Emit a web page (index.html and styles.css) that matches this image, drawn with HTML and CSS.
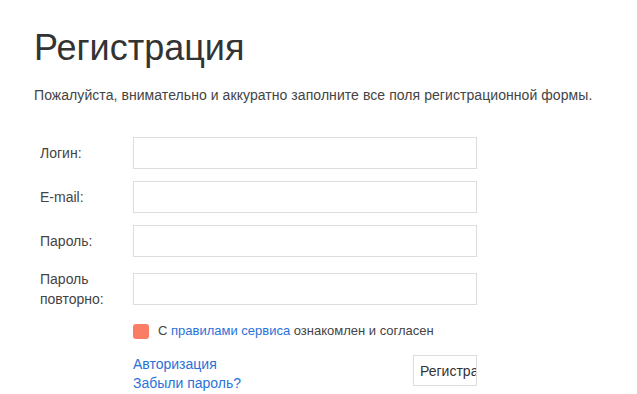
FILE: index.html
```html
<!DOCTYPE html>
<html lang="ru">
<head>
<meta charset="utf-8">
<title>Регистрация</title>
<link rel="stylesheet" href="styles.css">
</head>
<body>
<div class="page">
  <h1 class="title">Регистрация</h1>
  <p class="lead">Пожалуйста, внимательно и аккуратно заполните все поля регистрационной формы.</p>
  <form class="form">
    <div class="row">
      <label class="label">Логин:</label>
      <input class="field" type="text">
    </div>
    <div class="row">
      <label class="label">E-mail:</label>
      <input class="field" type="text">
    </div>
    <div class="row">
      <label class="label">Пароль:</label>
      <input class="field" type="password">
    </div>
    <div class="row">
      <label class="label">Пароль<br>повторно:</label>
      <input class="field" type="password">
    </div>
    <div class="agree">
      <span class="check"></span>
      <span class="agree-text">С <a class="link" href="#">правилами сервиса</a> ознакомлен и согласен</span>
    </div>
    <div class="actions">
      <div class="links">
        <a class="link" href="#">Авторизация</a>
        <a class="link" href="#">Забыли пароль?</a>
      </div>
      <button class="btn" type="button"><span class="btn-text">Регистрация</span></button>
    </div>
  </form>
</div>
</body>
</html>
```
FILE: styles.css
```css
html, body {
  margin: 0;
  padding: 0;
  background: #fff;
}
body {
  font-family: "Liberation Sans", Arial, sans-serif;
  font-size: 14px;
  color: #333;
}
.page {
  padding: 28px 0 0 34px;
}
.title {
  margin: 0;
  font-size: 36px;
  font-weight: normal;
  line-height: 40px;
  color: #333;
}
.lead {
  margin: 17px 0 0;
  line-height: 20px;
  letter-spacing: 0.065px;
  color: #444;
}
.form {
  margin: 32px 0 0 6px;
  display: flex;
  flex-direction: column;
}
.row {
  display: flex;
  align-items: center;
  margin-bottom: 12px;
}
.label {
  width: 93px;
  flex: none;
  line-height: 20px;
  color: #444;
}
.field {
  box-sizing: border-box;
  width: 344px;
  height: 32px;
  margin: 0;
  border: 1px solid #ddd;
  background: #fff;
  padding: 0 8px;
  font: inherit;
}
.agree {
  display: flex;
  align-items: center;
  margin-left: 93px;
  margin-top: 0;
  line-height: 20px;
  font-size: 13px;
}
.check {
  width: 16px;
  height: 15px;
  border-radius: 3px;
  background: #fa7d66;
  margin-right: 9px;
  flex: none;
}
.agree-text {
  color: #444;
}
.link {
  color: #2a72d8;
  text-decoration: none;
}
.actions {
  display: flex;
  justify-content: space-between;
  align-items: flex-start;
  margin-left: 93px;
  width: 344px;
  margin-top: 14px;
}
.links {
  display: flex;
  flex-direction: column;
  line-height: 19px;
}
.btn {
  box-sizing: border-box;
  width: 64px;
  height: 31px;
  padding: 0 0 0 6px;
  margin: 0;
  border: 1px solid #ddd;
  background: #fff;
  overflow: hidden;
  text-align: left;
  white-space: nowrap;
  font: inherit;
  color: #333;
}
.btn-text {
  display: block;
}
```
